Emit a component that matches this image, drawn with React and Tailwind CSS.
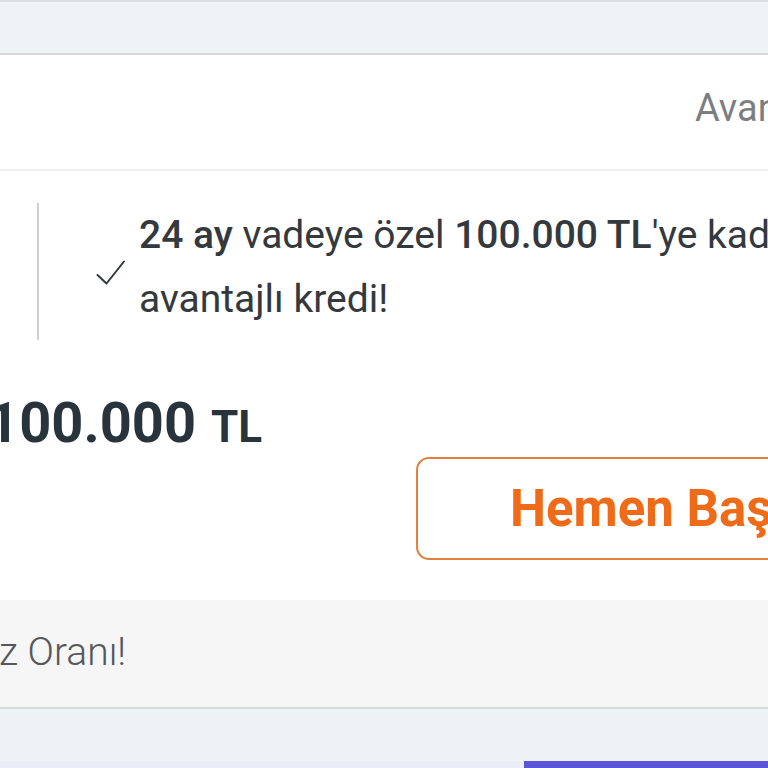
export default function App() {
  return (
    <div className="w-[768px] h-[768px] overflow-hidden bg-white flex flex-col" style={{ fontFamily: "Roboto, 'Noto Sans', Arial, sans-serif" }}>
      {/* top strip */}
      <div className="h-[55px] shrink-0 bg-[#eef3f6] border-t-2 border-t-[#d9dee1] border-b-2 border-b-[#d5d9dc]" />
      {/* header */}
      <div className="h-[116px] shrink-0 border-b-2 border-[#f0f0f0] flex items-start pt-[34px] pl-[695px] whitespace-nowrap">
        <span className="text-[38px] leading-[38px] text-[#7c7f82]">Avantajlar</span>
      </div>
      {/* content */}
      <div className="flex-1 flex flex-col whitespace-nowrap">
        <div className="mt-[32px] h-[137px] flex shrink-0">
          <div className="ml-[37px] w-[2px] h-full shrink-0 bg-[#cfcfcf]" />
          <div className="ml-[57px] self-center shrink-0 pt-[2px]">
            <svg width="30" height="26" viewBox="0 0 30 26" fill="none">
              <path d="M1.5 15 L10.5 23.5 L28 1.5" stroke="#33383c" strokeWidth="2" strokeLinecap="round" strokeLinejoin="round" />
            </svg>
          </div>
          <div className="ml-[13px] text-[39px] leading-[64px] text-[#34393e]">
            <div>
              <span className="font-medium">24 ay</span> vadeye özel <span className="font-medium">100.000 TL</span>'ye kadar
            </div>
            <div>avantajlı kredi!</div>
          </div>
        </div>
        <div className="mt-[55px] -ml-[13px] flex items-baseline text-[#28333b] font-bold leading-[56px]">
          <span className="text-[56px]">100.000</span>
          <span className="text-[44px] ml-[15px]">TL</span>
        </div>
        <div className="mt-[2px] ml-[416px] w-[500px] h-[103px] shrink-0 border-2 border-[#e2803f] rounded-[13px] flex items-center pl-[92px]">
          <span className="text-[51px] font-bold text-[#f06b17] leading-none">Hemen Başvur</span>
        </div>
      </div>
      {/* gray footer */}
      <div className="h-[109px] shrink-0 bg-[#f6f6f6] border-b-2 border-[#d3d9dd] flex items-center whitespace-nowrap">
        <span className="text-[39px] leading-[39px] font-light text-[#55585b] -ml-[1px] pb-[2px]">z Oranı!</span>
      </div>
      {/* bottom */}
      <div className="h-[59px] shrink-0 bg-[#edf2f5] flex flex-col">
        <div className="h-[52px] shrink-0" />
        <div className="flex-1 flex bg-[#eaeef8]">
          <div className="w-[524px]" />
          <div className="flex-1 bg-[#5a55d8]" />
        </div>
      </div>
    </div>
  );
}
